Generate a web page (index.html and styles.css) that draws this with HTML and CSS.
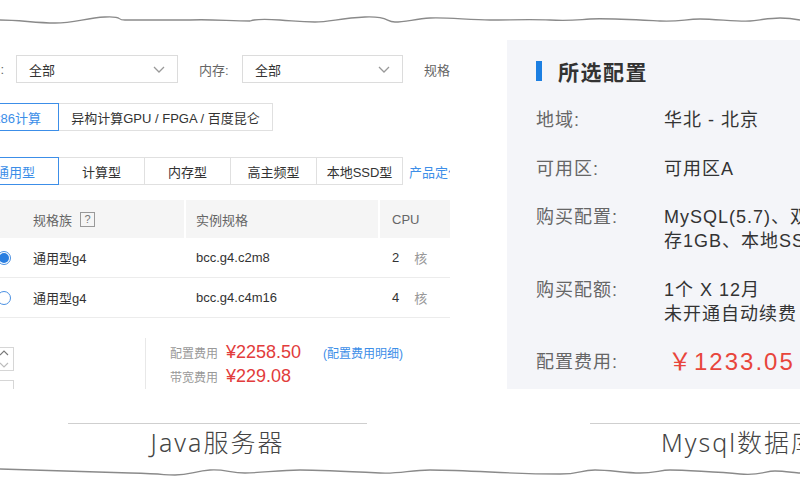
FILE: index.html
```html
<!DOCTYPE html>
<html lang="zh-CN">
<head>
<meta charset="utf-8">
<title>配置对比</title>
<link rel="stylesheet" href="styles.css">
</head>
<body>
<div class="page">
  <svg class="wave" viewBox="0 0 800 40" width="800" height="40">
    <path d="M0,20 C20,20 35,23 55,23 S85,18 105,17 S115,20 125,20 L190,20 C210,19 230,21 250,21 C255,19 265,19 280,20 S300,22 315,22 S340,18 365,17 S385,22 395,22 S415,19 430,18 S470,20 490,20 S530,19 550,20 S575,20 590,19 S640,20 660,21 S685,19 700,19 S740,22 750,21 S770,18 780,18 S795,19 800,20" />
  </svg>

  <div class="panels">
    <div class="left-panel">
      <div class="left-inner">
        <div class="filter-row">
          <span class="f-label">CPU:</span>
          <div class="select"><span>全部</span>
            <svg class="chev" viewBox="0 0 12 7" width="12" height="7"><polyline points="1,1 6,6 11,1"/></svg>
          </div>
          <span class="f-label2">内存:</span>
          <div class="select select2"><span>全部</span>
            <svg class="chev" viewBox="0 0 12 7" width="12" height="7"><polyline points="1,1 6,6 11,1"/></svg>
          </div>
          <span class="f-label3">规格</span>
        </div>

        <div class="tabs tabs-arch">
          <div class="tab tab-first active">x86计算</div>
          <div class="tab tab-wide">异构计算GPU / FPGA / 百度昆仑</div>
        </div>

        <div class="tabs tabs-type">
          <div class="tab tab-type active">通用型</div>
          <div class="tab tab-type">计算型</div>
          <div class="tab tab-type">内存型</div>
          <div class="tab tab-type">高主频型</div>
          <div class="tab tab-type">本地SSD型</div>
          <span class="tab-link">产品定位</span>
        </div>

        <div class="table">
          <div class="tr th">
            <div class="td c0"></div>
            <div class="td c1">规格族 <span class="qmark">?</span></div>
            <div class="td c2">实例规格</div>
            <div class="td c3">CPU</div>
          </div>
          <div class="tr">
            <div class="td c0"><span class="radio checked"></span></div>
            <div class="td c1">通用型g4</div>
            <div class="td c2">bcc.g4.c2m8</div>
            <div class="td c3">2<span class="unit">核</span></div>
          </div>
          <div class="tr">
            <div class="td c0"><span class="radio"></span></div>
            <div class="td c1">通用型g4</div>
            <div class="td c2">bcc.g4.c4m16</div>
            <div class="td c3">4<span class="unit">核</span></div>
          </div>
        </div>

        <div class="summary">
          <div class="spin-col">
            <div class="spinner">
              <svg viewBox="0 0 12 22" width="12" height="22"><polyline class="up" points="2,7 6,3 10,7"/><polyline class="down" points="2,15 6,19 10,15"/></svg>
            </div>
            <div class="spinner spinner2"></div>
          </div>
          <div class="divider"></div>
          <div class="prices">
            <div class="price-row"><span class="p-label">配置费用</span><span class="p-val">¥2258.50</span><span class="p-link">(配置费用明细)</span></div>
            <div class="price-row"><span class="p-label">带宽费用</span><span class="p-val">¥229.08</span></div>
          </div>
        </div>
      </div>
    </div>

    <div class="right-panel">
      <div class="r-title"><span class="r-bar"></span>所选配置</div>
      <div class="r-row"><div class="r-label">地域:</div><div class="r-val">华北 - 北京</div></div>
      <div class="r-row"><div class="r-label">可用区:</div><div class="r-val">可用区A</div></div>
      <div class="r-row r-tight"><div class="r-label">购买配置:</div><div class="r-val"><div>MySQL(5.7)、双机高可用版、1核、内</div><div>存1GB、本地SSD盘50GB</div></div></div>
      <div class="r-row"><div class="r-label">购买配额:</div><div class="r-val"><div>1个 X 12月</div><div>未开通自动续费</div></div></div>
      <div class="r-row r-tight"><div class="r-label">配置费用:</div><div class="r-val r-price">￥1233.05</div></div>
    </div>
  </div>

  <div class="captions">
    <div class="caption cap-left"><div class="cap-line"></div><div class="cap-text">Java服务器</div></div>
    <div class="caption cap-right"><div class="cap-line"></div><div class="cap-text">Mysql数据库</div></div>
  </div>

  <svg class="wave" viewBox="0 0 800 40" width="800" height="40">
    <path d="M0,9 C40,10 90,12 130,13 S160,15 175,15 S195,11 210,10 S230,13 245,13 S280,10 300,10 S360,12 380,13 S410,10 430,10 S470,11 490,12 S540,14 560,14 S580,10 595,10 S625,13 640,13 S660,10 670,10 S720,12 740,14 S765,11 775,11 S795,13 800,13" />
  </svg>
</div>
</body>
</html>
```

FILE: styles.css
```css
* { box-sizing: border-box; }
html, body { margin: 0; padding: 0; background: #fff; }
body {
  width: 800px;
  height: 500px;
  overflow: hidden;
  font-family: "Liberation Sans", "Noto Sans CJK SC", sans-serif;
  color: #333;
}
.page { width: 800px; height: 500px; overflow: hidden; }

.wave { display: block; }
.wave path { fill: none; stroke: #8a8a8a; stroke-width: 1.3; }

.panels { display: flex; height: 349px; overflow: hidden; }

/* ---------- left panel ---------- */
.left-panel { width: 450px; flex: none; overflow: hidden; background: #fff; }
.left-inner { margin-left: -28px; width: 478px; padding-top: 15px; font-size: 13px; }

.filter-row { display: flex; align-items: center; height: 28px; }
.f-label { width: 32px; flex: none; text-align: right; color: #666; margin-right: 12px; white-space: nowrap; }
.select {
  width: 162px; flex: none; height: 28px; border: 1px solid #dcdcdc;
  display: flex; align-items: center; justify-content: space-between;
  padding: 0 12px; color: #333;
}
.select2 { width: 161px; }
.chev polyline { fill: none; stroke: #999; stroke-width: 1.3; }
.f-label2 { width: 43px; flex: none; margin-left: 21px; color: #666; }
.f-label3 { margin-left: 21px; color: #666; white-space: nowrap; }

.tabs { display: flex; align-items: center; height: 28px; }
.tabs-arch { margin-top: 20px; }
.tabs-type { margin-top: 26px; }
.tab {
  flex: none;
  height: 28px; border: 1px solid #e0e0e0; display: flex; align-items: center;
  justify-content: center; color: #333; white-space: nowrap; background: #fff;
  margin-left: -1px; position: relative;
}
.tab:first-child { margin-left: 0; }
.tab.active { border-color: #3c8ee8; color: #3c8ee8; z-index: 1; }
.tab-first { width: 87px; justify-content: flex-end; padding-right: 17px; }
.tab-wide { width: 215px; }
.tab-type { width: 87px; }
.tab-link { flex: none; margin-left: 6px; color: #3c8ee8; white-space: nowrap; }

.table { margin-top: 15px; width: 478px; }
.tr { display: grid; grid-template-columns: 48px 164px 194px 72px; height: 40px; border-bottom: 1px solid #ececec; }
.th { height: 38px; background: #f5f5f5; border-bottom: none; color: #666; }
.td { display: flex; align-items: center; border-left: 2px solid transparent; white-space: nowrap; }
.th .c2, .th .c3 { border-left-color: #fff; }
.c0 { border-left: none; justify-content: flex-end; padding-right: 9px; }
.c1 { padding-left: 13px; border-left: none; }
.c2 { padding-left: 10px; }
.c3 { padding-left: 12px; }
.qmark {
  display: inline-flex; align-items: center; justify-content: center;
  width: 15px; height: 15px; border: 1px solid #999; font-size: 11px;
  color: #777; margin-left: 8px;
}
.unit { color: #999; margin-left: 15px; }
.radio {
  width: 14px; height: 14px; border-radius: 50%; border: 1px solid #4a90e2;
  display: flex; align-items: center; justify-content: center; background: #fff;
}
.radio.checked::after {
  content: ""; width: 10px; height: 10px; border-radius: 50%; background: #2a7ee0;
}

.summary { display: flex; height: 80px; }
.spin-col { width: 42px; flex: none; display: flex; flex-direction: column; align-items: flex-end; padding-top: 29px; }
.spinner {
  width: 30px; height: 27px; border: 1px solid #d6d6d6; border-left: none;
  display: flex; align-items: center; justify-content: flex-end; padding-right: 3px;
}
.spinner svg polyline { fill: none; stroke-width: 1.1; }
.spinner .up { stroke: #777; }
.spinner .down { stroke: #bbb; }
.spinner2 { margin-top: 9px; height: 20px; }
.divider { width: 1px; flex: none; background: #e8e8e8; margin-left: 131px; margin-top: 20px; }
.prices { margin-left: 24px; padding-top: 22px; }
.price-row { display: flex; align-items: center; height: 24px; white-space: nowrap; }
.p-label { color: #999; font-size: 12px; }
.p-val { color: #e23c3c; font-size: 18px; margin-left: 8px; }
.p-link { color: #3c8ee8; font-size: 12px; margin-left: 22px; }

/* ---------- right panel ---------- */
.right-panel {
  width: 320px; flex: none; margin-left: 57px; background: #f4f5f9;
  padding: 19px 0 0 29px; overflow: hidden;
}
.r-title { display: flex; align-items: center; height: 24px; font-size: 21px; font-weight: bold; color: #333; letter-spacing: 1.5px; }
.r-bar { width: 6px; height: 20px; background: #1c7fe2; margin-right: 16px; }
.r-row { display: flex; margin-top: 25px; font-size: 18px; line-height: 24px; white-space: nowrap; letter-spacing: 1px; }
.r-tight { margin-top: 24px; }
.r-label { width: 128px; flex: none; color: #666; }
.r-val { color: #333; }
.r-price { color: #e8453c; font-size: 24px; letter-spacing: 2px; margin-left: 4px; }

/* ---------- captions ---------- */
.captions { display: flex; height: 71px; }
.caption { width: 299px; flex: none; padding-top: 34px; }
.cap-left { margin-left: 68px; }
.cap-right { margin-left: 223px; }
.cap-line { height: 1px; background: #cfcfcf; }
.cap-text {
  margin-top: 3px; text-align: center; line-height: 30px; font-size: 25px;
  font-family: "Noto Sans", "Noto Sans CJK SC", sans-serif; font-weight: 300;
  color: #444; letter-spacing: 2px; white-space: nowrap;
}
```
